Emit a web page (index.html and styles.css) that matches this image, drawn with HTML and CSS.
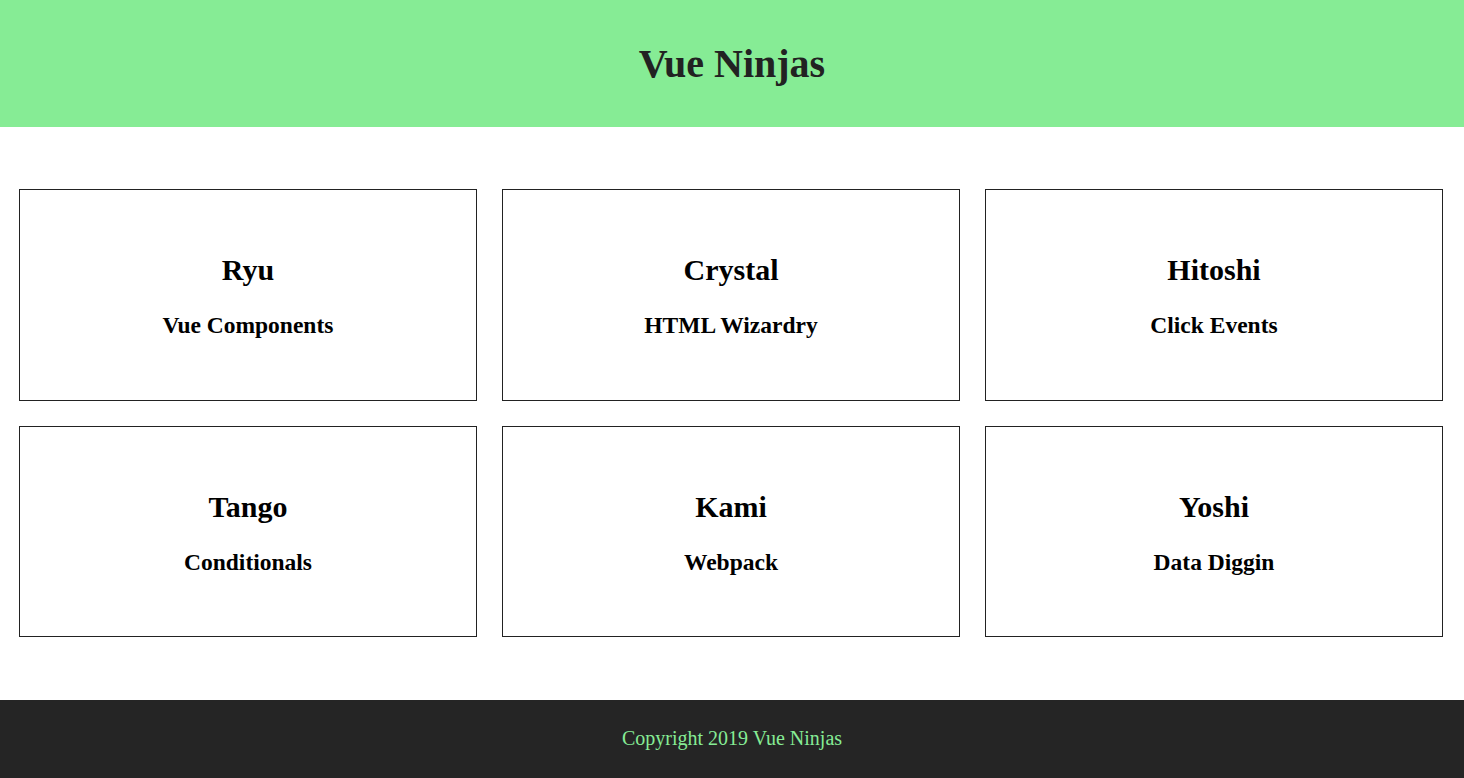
FILE: index.html
```html
<!DOCTYPE html>
<html lang="en">
<head>
<meta charset="utf-8">
<title>Vue Ninjas</title>
<link rel="stylesheet" href="styles.css">
</head>
<body>
<header class="site-header">
  <h1 class="site-title">Vue Ninjas</h1>
</header>
<main class="ninjas">
  <ul class="ninja-list">
    <li class="ninja-card"><h2 class="ninja-name">Ryu</h2><h3 class="ninja-speciality">Vue Components</h3></li>
    <li class="ninja-card"><h2 class="ninja-name">Crystal</h2><h3 class="ninja-speciality">HTML Wizardry</h3></li>
    <li class="ninja-card"><h2 class="ninja-name">Hitoshi</h2><h3 class="ninja-speciality">Click Events</h3></li>
    <li class="ninja-card"><h2 class="ninja-name">Tango</h2><h3 class="ninja-speciality">Conditionals</h3></li>
    <li class="ninja-card"><h2 class="ninja-name">Kami</h2><h3 class="ninja-speciality">Webpack</h3></li>
    <li class="ninja-card"><h2 class="ninja-name">Yoshi</h2><h3 class="ninja-speciality">Data Diggin</h3></li>
  </ul>
</main>
<footer class="site-footer">
  <p class="copyright">Copyright 2019 Vue Ninjas</p>
</footer>
</body>
</html>
```
FILE: styles.css
```css
html, body {
  margin: 0;
  padding: 0;
  background: #ffffff;
  font-family: "Liberation Serif", "Times New Roman", serif;
}

.site-header {
  height: 127px;
  background: #86ec95;
  display: flex;
  align-items: center;
  justify-content: center;
}

.site-title {
  margin: 0;
  font-size: 40px;
  line-height: 46px;
  font-weight: bold;
  color: #222222;
  text-align: center;
}

.ninjas {
  padding: 62px 21px 63px 19px;
}

.ninja-list {
  list-style: none;
  margin: 0;
  padding: 0;
  display: grid;
  grid-template-columns: repeat(3, 1fr);
  grid-template-rows: 212px 211px;
  column-gap: 25px;
  row-gap: 25px;
}

.ninja-card {
  box-sizing: border-box;
  border: 1px solid #222222;
  padding-top: 62.5px;
  display: flex;
  flex-direction: column;
  align-items: center;
  gap: 25px;
  text-align: center;
  color: #000000;
}

.ninja-name {
  margin: 0;
  font-size: 30px;
  line-height: 34px;
  font-weight: bold;
}

.ninja-speciality {
  margin: 0;
  font-size: 23.5px;
  line-height: 27px;
  font-weight: bold;
}

.site-footer {
  height: 78px;
  background: #252525;
  display: flex;
  align-items: center;
  justify-content: center;
}

.copyright {
  margin: 0 0 2px;
  font-size: 20px;
  line-height: 23px;
  color: #86ec95;
  text-align: center;
}
```
